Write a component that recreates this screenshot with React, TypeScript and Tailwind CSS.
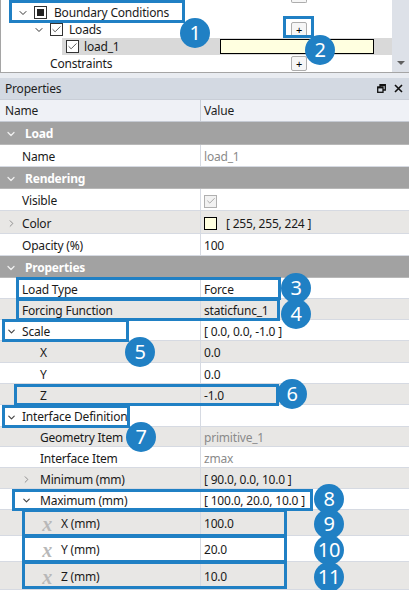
import { ChevronDown, ChevronRight, Check } from "lucide-react";

type Row = {
  label: string;
  h: string;
  value?: string;
  kind?: "group" | "item";
  level?: number;
  chevron?: "down" | "right";
  alt?: boolean;
  muted?: boolean;
  icon?: boolean;
  swatch?: boolean;
  check?: boolean;
};

const rows: Row[] = [
  { label: "Load", kind: "group", h: "h-[23px]" },
  { label: "Name", value: "load_1", muted: true, h: "h-[22px]" },
  { label: "Rendering", kind: "group", h: "h-[22px]" },
  { label: "Visible", check: true, h: "h-[22px]" },
  { label: "Color", value: "[ 255, 255, 224 ]", chevron: "right", alt: true, swatch: true, h: "h-[23px]" },
  { label: "Opacity (%)", value: "100", h: "h-[22px]" },
  { label: "Properties", kind: "group", h: "h-[22px]" },
  { label: "Load Type", value: "Force", h: "h-[21px]" },
  { label: "Forcing Function", value: "staticfunc_1", alt: true, h: "h-[21px]" },
  { label: "Scale", value: "[ 0.0, 0.0, -1.0 ]", chevron: "down", h: "h-[21px]" },
  { label: "X", value: "0.0", level: 2, alt: true, h: "h-[22px]" },
  { label: "Y", value: "0.0", level: 2, h: "h-[21px]" },
  { label: "Z", value: "-1.0", level: 2, alt: true, h: "h-[21px]" },
  { label: "Interface Definition", chevron: "down", h: "h-[22px]" },
  { label: "Geometry Item", value: "primitive_1", level: 2, alt: true, muted: true, h: "h-[20px]" },
  { label: "Interface Item", value: "zmax", level: 2, muted: true, h: "h-[21px]" },
  { label: "Minimum (mm)", value: "[ 90.0, 0.0, 10.0 ]", level: 2, chevron: "right", alt: true, h: "h-[21px]" },
  { label: "Maximum (mm)", value: "[ 100.0, 20.0, 10.0 ]", level: 2, chevron: "down", h: "h-[21px]" },
  { label: "X (mm)", value: "100.0", level: 3, icon: true, alt: true, h: "h-[26px]" },
  { label: "Y (mm)", value: "20.0", level: 3, icon: true, h: "h-[26px]" },
  { label: "Z (mm)", value: "10.0", level: 3, icon: true, alt: true, h: "h-[28px]" },
];

function PlusButton() {
  return (
    <div className="w-[16px] h-[15px] rounded-[2px] border border-[#adadad] bg-[#f6f6f6] flex items-center justify-center text-[11px] leading-none text-black">
      +
    </div>
  );
}

function TreeCheck({ mode }: { mode: "fill" | "check" }) {
  return (
    <div className="w-[13px] h-[13px] border border-[#333] bg-white flex items-center justify-center">
      {mode === "fill" ? (
        <div className="w-[7px] h-[7px] bg-[#222]" />
      ) : (
        <Check size={11} strokeWidth={1.6} className="text-[#222]" />
      )}
    </div>
  );
}

function PropRow({ row }: { row: Row }) {
  if (row.kind === "group") {
    return (
      <div className={`${row.h} flex items-center pt-[2px] bg-[#a2a2a2] border-b border-[#b8b8b8]`}>
        <div className="w-[22px] flex justify-center">
          <ChevronDown size={12} strokeWidth={2.5} className="text-[#f0f0f0]" />
        </div>
        <span className="pl-[3px] font-bold text-white">{row.label}</span>
      </div>
    );
  }
  const level = row.level ?? 1;
  const bg = row.alt ? "bg-[#e8e7e5]" : "bg-white";
  return (
    <div className={`${row.h} ${bg} flex border-b border-[#d6dae2]`}>
      <div className="w-[201px] flex items-center pt-[3px] border-r border-[#d6dae2]">
        {level === 1 && (
          <div className="w-[22px] flex justify-center">
            {row.chevron === "down" && <ChevronDown size={11} strokeWidth={2.5} className="text-[#444]" />}
            {row.chevron === "right" && <ChevronRight size={11} strokeWidth={2} className="text-[#888]" />}
          </div>
        )}
        {level === 2 && (
          <div className="w-[40px] flex justify-end pr-[8px]">
            {row.chevron === "down" && <ChevronDown size={11} strokeWidth={2.5} className="text-[#444]" />}
            {row.chevron === "right" && <ChevronRight size={11} strokeWidth={2} className="text-[#888]" />}
          </div>
        )}
        {level === 3 && (
          <div className="w-[61px] flex justify-end pr-[9px]">
            <span className="font-['Liberation_Serif',serif] italic font-bold text-[20px] text-[#b8b8b8] leading-none">
              x
            </span>
          </div>
        )}
        <span className="text-[#1a1a1a]">{row.label}</span>
      </div>
      <div className="flex-1 flex items-center pt-[3px] pl-[3px]">
        {row.check && (
          <div className="w-[13px] h-[13px] border border-[#b0b0b0] bg-[#f2f2f2] flex items-center justify-center">
            <Check size={10} strokeWidth={2} className="text-[#9a9a9a]" />
          </div>
        )}
        {row.swatch && <div className="w-[13px] h-[13px] border border-black bg-[#ffffe0] mr-[9px]" />}
        {row.value && (
          <span className={row.muted ? "text-[#8a8a8a]" : "text-[#1a1a1a]"}>{row.value}</span>
        )}
      </div>
    </div>
  );
}

export default function App() {
  return (
    <div className="relative w-[409px] h-[590px] overflow-hidden bg-white font-['Noto_Sans',sans-serif] text-[12px] tracking-[-0.2px]">
      {/* tree */}
      <div className="h-[73px] flex border-b border-[#a5a5a5] border-l border-l-[#a5a5a5]">
        <div className="flex-1 overflow-hidden">
          <div className="h-[4px] pl-[290px]">
            <div className="w-[16px] h-[3px] border-x border-b border-[#adadad] bg-[#f6f6f6] rounded-b-[2px]" />
          </div>
          <div className="h-[17px] flex items-center">
            <div className="w-[33px] flex justify-end pr-[5px]">
              <ChevronDown size={12} strokeWidth={2} className="text-[#333]" />
            </div>
            <TreeCheck mode="fill" />
            <span className="ml-[7px] text-[#1a1a1a]">Boundary Conditions</span>
          </div>
          <div className="h-[17px] flex items-center">
            <div className="w-[49px] flex justify-end pr-[5px]">
              <ChevronDown size={12} strokeWidth={2} className="text-[#333]" />
            </div>
            <TreeCheck mode="check" />
            <span className="ml-[6px] text-[#1a1a1a]">Loads</span>
            <div className="ml-auto mr-[85px]">
              <PlusButton />
            </div>
          </div>
          <div className="h-[17px] flex items-center pl-[61px]">
            <div className="flex-1 h-full bg-[#d9d9d9] flex items-center pl-[4px]">
              <TreeCheck mode="check" />
              <span className="ml-[5px] text-[#1a1a1a]">load_1</span>
              <div className="ml-auto mr-[18px] w-[154px] h-[15px] border border-black bg-[#ffffe0]" />
            </div>
          </div>
          <div className="h-[17px] flex items-center pl-[49px]">
            <span className="text-[#1a1a1a]">Constraints</span>
            <div className="ml-auto mr-[85px]">
              <PlusButton />
            </div>
          </div>
        </div>
        <div className="w-[17px] bg-[#dde1e8] flex flex-col justify-end items-center pb-[7px]">
          <div className="w-0 h-0 border-l-[4px] border-r-[4px] border-t-[4px] border-l-transparent border-r-transparent border-t-[#606060]" />
        </div>
      </div>
      <div className="h-[5px] bg-[#e9ecf1]" />

      {/* properties title */}
      <div className="h-[21px] bg-[#d3d9e2] flex items-center px-[5px]">
        <span className="text-[#1e1e1e]">Properties</span>
        <div className="ml-auto flex items-center gap-[8px] pr-[1px]">
          <svg width="9" height="9" viewBox="0 0 9 9" fill="none" stroke="#111" strokeWidth="1.3">
            <rect x="0.7" y="3" width="5.3" height="5.3" />
            <path d="M3 3V0.7h5.3V6H6" />
            <path d="M0.7 3.6h5.3" strokeWidth="1.6" />
            <path d="M3 1.3h5.3" strokeWidth="1.6" />
          </svg>
          <svg width="9" height="9" viewBox="0 0 9 9" stroke="#111" strokeWidth="1.6">
            <path d="M1 1l7 7M8 1L1 8" />
          </svg>
        </div>
      </div>

      {/* column header */}
      <div className="h-[23px] flex bg-[#eff1f6] border-b border-[#c5cad3] border-t border-t-[#c9ced7]">
        <div className="w-[201px] flex items-center pl-[5px] border-r border-[#c9ced7] text-[#1e1e1e]">Name</div>
        <div className="flex-1 flex items-center pl-[3px] text-[#1e1e1e]">Value</div>
      </div>

      {rows.map((r, i) => (
        <PropRow key={i} row={r} />
      ))}

      {/* annotation boxes */}
      <div className="absolute left-[9px] top-[0px] w-[176px] h-[23px] border-[3px] border-[#2080c4]" />
      <div className="absolute left-[283px] top-[16px] w-[31px] h-[22px] border-[3px] border-[#2080c4]" />
      <div className="absolute left-[16px] top-[277px] w-[265px] h-[23px] border-[3px] border-[#2080c4]" />
      <div className="absolute left-[16px] top-[298px] w-[264px] h-[23px] border-[3px] border-[#2080c4]" />
      <div className="absolute left-[2px] top-[319px] w-[127px] h-[23px] border-[3px] border-[#2080c4]" />
      <div className="absolute left-[14px] top-[384px] w-[265px] h-[22px] border-[3px] border-[#2080c4]" />
      <div className="absolute left-[2px] top-[405px] w-[128px] h-[23px] border-[3px] border-[#2080c4]" />
      <div className="absolute left-[12px] top-[489px] w-[301px] h-[22px] border-[3px] border-[#2080c4]" />
      <div className="absolute left-[22px] top-[509px] w-[265px] h-[28px] border-[3px] border-[#2080c4]" />
      <div className="absolute left-[22px] top-[535px] w-[265px] h-[28px] border-[3px] border-[#2080c4]" />
      <div className="absolute left-[22px] top-[561px] w-[265px] h-[28px] border-[3px] border-[#2080c4]" />

      {/* badges */}
      <div className="absolute left-[180px] top-[18px] w-[30px] h-[30px] rounded-full bg-[#2080c4] text-white text-[20px] flex items-center justify-center">1</div>
      <div className="absolute left-[305px] top-[35px] w-[30px] h-[30px] rounded-full bg-[#2080c4] text-white text-[20px] flex items-center justify-center">2</div>
      <div className="absolute left-[281px] top-[273px] w-[30px] h-[30px] rounded-full bg-[#2080c4] text-white text-[20px] flex items-center justify-center">3</div>
      <div className="absolute left-[281px] top-[299px] w-[30px] h-[30px] rounded-full bg-[#2080c4] text-white text-[20px] flex items-center justify-center">4</div>
      <div className="absolute left-[125px] top-[337px] w-[30px] h-[30px] rounded-full bg-[#2080c4] text-white text-[20px] flex items-center justify-center">5</div>
      <div className="absolute left-[277px] top-[379px] w-[30px] h-[30px] rounded-full bg-[#2080c4] text-white text-[20px] flex items-center justify-center">6</div>
      <div className="absolute left-[126px] top-[422px] w-[30px] h-[30px] rounded-full bg-[#2080c4] text-white text-[20px] flex items-center justify-center">7</div>
      <div className="absolute left-[314px] top-[484px] w-[30px] h-[30px] rounded-full bg-[#2080c4] text-white text-[20px] flex items-center justify-center">8</div>
      <div className="absolute left-[314px] top-[509px] w-[30px] h-[30px] rounded-full bg-[#2080c4] text-white text-[20px] flex items-center justify-center">9</div>
      <div className="absolute left-[314px] top-[535px] w-[30px] h-[30px] rounded-full bg-[#2080c4] text-white text-[20px] flex items-center justify-center">10</div>
      <div className="absolute left-[314px] top-[562px] w-[30px] h-[30px] rounded-full bg-[#2080c4] text-white text-[20px] flex items-center justify-center">11</div>
    </div>
  );
}
